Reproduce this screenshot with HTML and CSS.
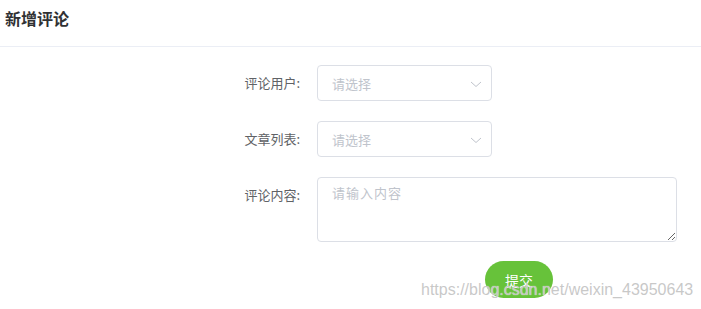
FILE: index.html
```html
<!DOCTYPE html>
<html lang="zh-CN">
<head>
<meta charset="utf-8">
<title>新增评论</title>
<link rel="stylesheet" href="styles.css">
</head>
<body>
<div class="page">
  <div class="header">新增评论</div>
  <form class="form">
    <div class="form-item">
      <label class="label">评论用户:</label>
      <div class="select">
        <span class="placeholder">请选择</span>
        <svg class="arrow" width="12" height="8" viewBox="0 0 12 8"><polyline points="1,2 6,6.5 11,2" fill="none" stroke="#c0c4cc" stroke-width="1"/></svg>
      </div>
    </div>
    <div class="form-item">
      <label class="label">文章列表:</label>
      <div class="select">
        <span class="placeholder">请选择</span>
        <svg class="arrow" width="12" height="8" viewBox="0 0 12 8"><polyline points="1,2 6,6.5 11,2" fill="none" stroke="#c0c4cc" stroke-width="1"/></svg>
      </div>
    </div>
    <div class="form-item">
      <label class="label">评论内容:</label>
      <textarea class="textarea" placeholder="请输入内容"></textarea>
    </div>
    <div class="form-item actions">
      <button type="button" class="btn">提交</button>
    </div>
  </form>
  <div class="watermark">https://blog.csdn.net/weixin_43950643</div>
</div>
</body>
</html>
```
FILE: styles.css
```css
html, body {
  margin: 0;
  padding: 0;
  background: #fff;
}
body {
  font-family: "Noto Sans CJK SC", "Liberation Sans", sans-serif;
  color: #606266;
}
.page {
  position: relative;
  width: 701px;
  height: 309px;
  overflow: hidden;
}
.header {
  height: 36px;
  line-height: 36px;
  padding: 0 5px 10px;
  font-size: 16px;
  font-weight: bold;
  color: #303133;
  border-bottom: 1px solid #ebeef5;
}
.form {
  margin: 18px 0 0 237px;
}
.form-item {
  display: flex;
  align-items: flex-start;
  margin-bottom: 20px;
}
.label {
  width: 80px;
  box-sizing: border-box;
  padding-right: 17px;
  text-align: right;
  font-size: 13px;
  line-height: 36px;
  color: #606266;
}
.select {
  width: 175px;
  height: 36px;
  box-sizing: border-box;
  border: 1px solid #dcdfe6;
  border-radius: 4px;
  display: flex;
  align-items: center;
  justify-content: space-between;
  padding: 0 9px 0 14px;
}
.placeholder {
  font-size: 13px;
  color: #c0c4cc;
}
.arrow {
  display: block;
  margin-top: 2px;
}
.textarea {
  width: 360px;
  height: 65px;
  box-sizing: border-box;
  border: 1px solid #dcdfe6;
  border-radius: 4px;
  padding: 5px 14px;
  margin: 0;
  font-family: "Noto Sans CJK SC", "Liberation Sans", sans-serif;
  font-size: 13px;
  letter-spacing: 1px;
  line-height: 1.5;
  color: #606266;
  resize: vertical;
  outline: none;
}
.textarea::placeholder {
  color: #c0c4cc;
}
.actions {
  padding-left: 248px;
  margin-top: -1px;
}
.btn {
  width: 68px;
  height: 37px;
  border: none;
  border-radius: 19px;
  background: #67c23a;
  color: #fff;
  font-family: "Noto Sans CJK SC", "Liberation Sans", sans-serif;
  font-size: 14px;
  padding: 0;
  cursor: pointer;
}
.watermark {
  position: absolute;
  left: 421px;
  top: 281px;
  font-family: "Liberation Sans", Arial, sans-serif;
  font-size: 16px;
  color: rgba(190, 190, 190, 0.85);
  text-shadow: 0 0 1px #fff;
  white-space: nowrap;
}
```
